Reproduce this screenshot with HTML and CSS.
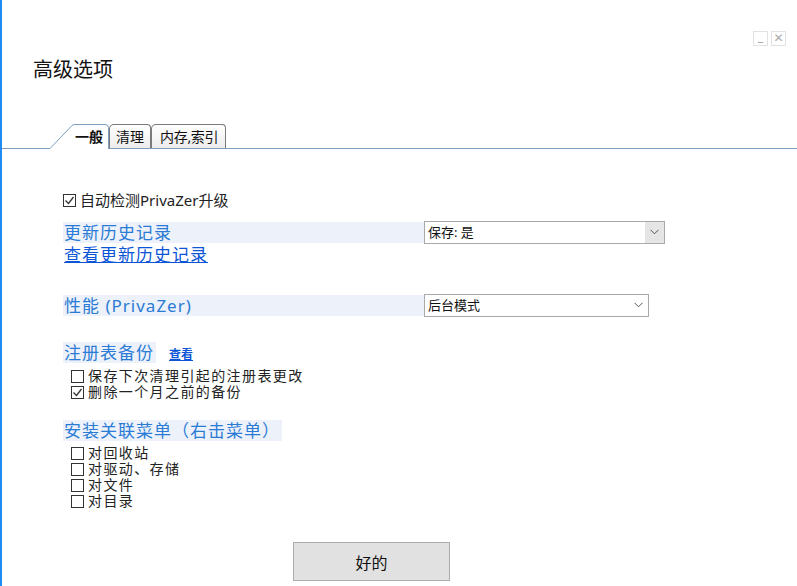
FILE: index.html
```html
<!DOCTYPE html>
<html>
    <head>
        <meta charset="utf-8" />
        <title>高级选项</title>
        <link rel="stylesheet" href="styles.css">
    </head>
    <body>
        <div class="winbar">
            <span class="wbtn wbtn-min">_</span>
            <span class="wbtn wbtn-close">✕</span>
        </div>

        <h1 class="title">高级选项</h1>

        <div class="tabs">
            <div class="tab tab-active">
                <svg class="tab-outline" width="59" height="25" viewBox="0 0 59 25">
                    <path d="M0 24.5 L22 1.5 Q23 0.5 25 0.5 L55 0.5 Q58.5 0.5 58.5 3.5 L58.5 25" fill="none" stroke="#7f9dbf" stroke-width="1" />
                </svg>
                <span>一般</span>
            </div>
            <div class="tab">清理</div>
            <div class="tab tab-wide">内存,索引</div>
        </div>

        <div class="content">
            <div class="check-row first">
                <span class="box checked"><svg width="11" height="11" viewBox="0 0 11 11"><polyline points="1.5,5.5 4.5,8.5 9.5,2" fill="none" stroke="#333" stroke-width="1.3" /></svg></span>
                <span>自动检测PrivaZer升级</span>
            </div>

            <div class="option-row row-history">
                <div class="label label-wide">更新历史记录</div>
                <div class="dropdown dropdown-long">
                    <span>保存: 是</span>
                    <span class="arrow"><svg width="9" height="6" viewBox="0 0 9 6"><polyline points="0.5,0.8 4.5,4.8 8.5,0.8" fill="none" stroke="#555" stroke-width="1" /></svg></span>
                </div>
            </div>
            <a class="link" href="#">查看更新历史记录</a>

            <div class="option-row row-perf">
                <div class="label label-wide">性能 (PrivaZer)</div>
                <div class="dropdown dropdown-short">
                    <span>后台模式</span>
                    <span class="arrow plain"><svg width="9" height="6" viewBox="0 0 9 6"><polyline points="0.5,0.8 4.5,4.8 8.5,0.8" fill="none" stroke="#555" stroke-width="1" /></svg></span>
                </div>
            </div>

            <div class="section-row">
                <span class="label">注册表备份</span>
                <a class="small-link" href="#">查看</a>
            </div>
            <div class="checks">
                <div class="check-row">
                    <span class="box"></span>
                    <span>保存下次清理引起的注册表更改</span>
                </div>
                <div class="check-row">
                    <span class="box checked"><svg width="11" height="11" viewBox="0 0 11 11"><polyline points="1.5,5.5 4.5,8.5 9.5,2" fill="none" stroke="#333" stroke-width="1.3" /></svg></span>
                    <span>删除一个月之前的备份</span>
                </div>
            </div>

            <div class="section-row section-menu">
                <span class="label">安装关联菜单（右击菜单）</span>
            </div>
            <div class="checks checks-menu">
                <div class="check-row"><span class="box"></span><span>对回收站</span></div>
                <div class="check-row"><span class="box"></span><span>对驱动、存储</span></div>
                <div class="check-row"><span class="box"></span><span>对文件</span></div>
                <div class="check-row"><span class="box"></span><span>对目录</span></div>
            </div>

            <div class="footer">
                <button class="ok-btn">好的</button>
            </div>
        </div>
    </body>
</html>
```

FILE: styles.css
```css
html,
body {
    margin: 0;
    padding: 0;
    background: #fff;
    font-family: 'Noto Sans', 'Noto Sans CJK SC', sans-serif;
    color: #222;
    --header-blue: #2a7bd5;
    --header-bg: #edf2fa;
    --link-blue: #0b55d6;
}

body {
    height: 586px;
    box-sizing: border-box;
    border-left: 2px solid #1e8cf0;
    overflow: hidden;
}

.winbar {
    display: flex;
    justify-content: flex-end;
    gap: 3px;
    margin-top: 31px;
    padding-right: 11px;
    height: 15px;
}

.wbtn {
    width: 13px;
    height: 13px;
    border: 1px solid #e2e2e2;
    color: #aaa;
    font-size: 12px;
    line-height: 13px;
    text-align: center;
    font-family: 'DejaVu Sans', sans-serif;
    font-weight: bold;
    overflow: hidden;
}

.wbtn-min {
    line-height: 10px;
    font-size: 10px;
}

.title {
    margin: 10px 0 0 31px;
    font-size: 20px;
    line-height: 28px;
    font-weight: normal;
    color: #111;
}

.tabs {
    display: flex;
    align-items: flex-end;
    margin-top: 39px;
    padding-left: 48px;
    border-bottom: 1px solid #7f9dbf;
    height: 25px;
}

.tab {
    box-sizing: border-box;
    height: 24px;
    padding: 0 6px;
    border: 1px solid #7a7a7a;
    border-bottom: none;
    border-radius: 5px 4px 0 0;
    background: linear-gradient(#ffffff, #ececec);
    font-size: 14px;
    line-height: 23px;
    color: #111;
    white-space: nowrap;
}

.tab-wide {
    padding: 0 7px 0 8px;
    letter-spacing: -0.3px;
}

.tab-active {
    position: relative;
    width: 59px;
    height: 25px;
    border: none;
    background: #fff;
    padding: 0 0 0 25px;
    margin-bottom: -1px;
    font-weight: bold;
    line-height: 25px;
}

.tab-active span {
    position: relative;
}

.tab-outline {
    position: absolute;
    left: 0;
    top: 0;
}

.content {
    padding-left: 61px;
}

.check-row {
    display: flex;
    align-items: center;
    gap: 4px;
    font-size: 14px;
    letter-spacing: 1.4px;
    line-height: 16px;
    height: 16px;
    color: #222;
}

.check-row.first {
    margin-top: 41px;
    height: 20px;
    line-height: 20px;
    font-size: 15px;
    letter-spacing: 0;
}

.box {
    box-sizing: border-box;
    width: 13px;
    height: 13px;
    border: 1.5px solid #333;
    display: flex;
    align-items: center;
    justify-content: center;
    flex-shrink: 0;
}

.option-row {
    display: flex;
    align-items: center;
    height: 22px;
}

.row-history {
    margin-top: 11px;
}

.row-perf {
    margin-top: 28px;
}

.label {
    background: var(--header-bg);
    color: var(--header-blue);
    font-size: 17px;
    letter-spacing: 1px;
    line-height: 21px;
    padding-left: 1px;
    padding-right: 2px;
}

.label-wide {
    width: 361px;
    box-sizing: border-box;
}

.dropdown {
    box-sizing: border-box;
    height: 23px;
    border: 1px solid #a9a9a9;
    display: flex;
    align-items: stretch;
    justify-content: space-between;
    font-size: 13px;
    color: #111;
    background: #fff;
}

.dropdown > span:first-child {
    padding-left: 3px;
    line-height: 21px;
}

.dropdown-long {
    width: 241px;
}

.dropdown-short {
    width: 225px;
}

.arrow {
    width: 19px;
    background: #e5e5e5;
    display: flex;
    align-items: center;
    justify-content: center;
}

.arrow.plain {
    background: #fff;
}

.link {
    display: inline-block;
    margin-top: 2px;
    padding-left: 1px;
    color: var(--link-blue);
    font-size: 17px;
    letter-spacing: 1px;
    line-height: 20px;
}

.section-row {
    display: flex;
    align-items: center;
    margin-top: 26px;
}

.small-link {
    margin-left: 13px;
    font-size: 12px;
    font-weight: bold;
    color: var(--link-blue);
    margin-top: 3px;
}

.section-menu {
    margin-top: 20px;
}

.checks {
    padding-left: 8px;
    margin-top: 5px;
}

.checks-menu {
    margin-top: 4px;
}

.footer {
    padding-left: 230px;
    margin-top: 33px;
}

.ok-btn {
    width: 157px;
    height: 39px;
    background: #e1e1e1;
    border: 1px solid #adadad;
    font-family: 'Noto Sans CJK SC', sans-serif;
    font-size: 16px;
    color: #111;
    padding: 0;
}
```
